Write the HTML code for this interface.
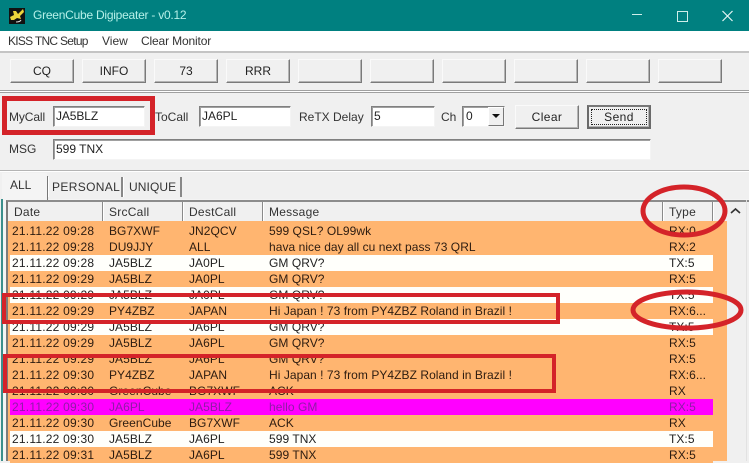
<!DOCTYPE html>
<html><head><meta charset="utf-8"><style>
html,body{margin:0;padding:0}
body{width:749px;height:461px;overflow:hidden;position:relative;background:#f0f0f0;font:12px "Liberation Sans",sans-serif;color:#222}
div,span{position:absolute;box-sizing:border-box;white-space:nowrap}
.btn{height:24px;width:64px;top:59px;background:#f0f0f0;border:1px solid;border-color:#fafafa #7a7a7a #7a7a7a #fafafa;box-shadow:inset -1px -1px 0 #b4b4b4;text-align:center;line-height:23px;color:#222}
.inp{background:#fff;height:21px;border:1px solid;border-color:#808080 #f4f4f4 #f4f4f4 #808080;box-shadow:inset 1px 1px 0 #a0a0a0;padding-left:2px;line-height:19px;color:#222}
.lbl{line-height:14px;color:#333}
.hd{top:202px;height:19px;line-height:20px;color:#333;letter-spacing:.25px}
.sep{top:202px;width:2px;height:19px;background:#8a8a8a;border-right:1px solid #fff}
.r{left:10px;width:703px;height:16px}
.r span{top:0;line-height:16px;color:#2d1c10;letter-spacing:.05px}
.r .c1{left:2px;letter-spacing:.22px}.c2{left:99px}.c3{left:179px}.c4{left:259px}.c5{left:659px}
.w{background:#fffffb}
.r.w span{color:#222}
.o{background:#ffb570}
.m{background:#ff00ff}
.r.m span{color:#8f1aa8}
.red{border:4px solid #d42329}
</style></head><body>
<div style="left:0;top:0;width:749px;height:31px;background:#008080"></div>
<svg style="position:absolute;left:9px;top:8px" width="16" height="16" viewBox="0 0 16 16"><rect width="16" height="16" fill="#111"/><path d="M1 9 5 7 4 3 7 3 9 6 14 1 15 4 11 8 12 11 8 10 5 12 2 12Z" fill="#ecd53c"/><path d="M7 14Q11 14 12 12" stroke="#ddd" fill="none"/></svg>
<div style="left:33px;top:8px;line-height:15px;color:#b5f0e8;font-size:12px;letter-spacing:-.24px">GreenCube Digipeater - v0.12</div>
<svg style="position:absolute;left:630px;top:6px" width="119" height="20" viewBox="0 0 119 20"><path d="M2 8.5H12" stroke="#cfeeea" stroke-width="1"/><rect x="47.5" y="5.5" width="10" height="10" fill="none" stroke="#cfeeea"/><path d="M92.500 5 102.500 15M102.500 5 92.500 15" stroke="#e6f6f4" stroke-width="1.2"/></svg>

<div style="left:0;top:31px;width:749px;height:20px;background:#fff"></div>
<div class="lbl" style="left:8px;top:34px;letter-spacing:-.72px">KISS TNC Setup</div>
<div class="lbl" style="left:102px;top:34px">View</div>
<div class="lbl" style="left:141px;top:34px;letter-spacing:-.15px">Clear Monitor</div>
<div style="left:0;top:51px;width:749px;height:2px;background:#c4c4c4"></div>

<div class="btn" style="left:10px">CQ</div>
<div class="btn" style="left:82px">INFO</div>
<div class="btn" style="left:154px">73</div>
<div class="btn" style="left:226px">RRR</div>
<div class="btn" style="left:298px"></div>
<div class="btn" style="left:370px"></div>
<div class="btn" style="left:442px"></div>
<div class="btn" style="left:514px"></div>
<div class="btn" style="left:586px"></div>
<div class="btn" style="left:658px"></div>
<div style="left:0;top:90px;width:749px;height:3px;background:#fff;border-top:1px solid #a0a0a0;border-bottom:1px solid #a0a0a0"></div>

<div class="lbl" style="left:9px;top:110px;letter-spacing:-.1px">MyCall</div>
<div class="inp" style="left:53px;top:106px;width:92px;letter-spacing:-.1px">JA5BLZ</div>
<div class="lbl" style="left:155px;top:110px">ToCall</div>
<div class="inp" style="left:199px;top:106px;width:92px">JA6PL</div>
<div class="lbl" style="left:299px;top:110px">ReTX Delay</div>
<div class="inp" style="left:371px;top:106px;width:64px">5</div>
<div class="lbl" style="left:441px;top:110px">Ch</div>
<div class="inp" style="left:462px;top:106px;width:43px;padding-left:3px">0</div>
<div style="left:488px;top:107px;width:16px;height:19px;background:#f0f0f0;border:1px solid;border-color:#fff #777 #777 #fff"></div>
<svg style="position:absolute;left:491px;top:113px" width="10" height="6"><path d="M1 1H9L5 5Z" fill="#111"/></svg>
<div class="btn" style="left:515px;top:105px;letter-spacing:.4px">Clear</div>
<div class="btn" style="left:587px;top:105px;border:2px solid #6a6a6a;border-top-color:#777;line-height:21px;letter-spacing:.4px">Send</div>
<div style="left:591px;top:109px;width:56px;height:16px;border:1px dotted #222"></div>
<div class="lbl" style="left:9px;top:142px">MSG</div>
<div class="inp" style="left:53px;top:139px;width:598px">599 TNX</div>
<div style="left:0;top:170px;width:749px;height:2px;background:#b4b4b4;border-bottom:1px solid #fff"></div>

<div style="left:2px;top:199px;width:747px;height:262px;background:#f4f4f4"></div>
<div style="left:2px;top:173px;width:45px;height:27px;background:#f4f4f4"></div>
<div style="left:47px;top:176px;width:1px;height:24px;background:#777"></div>
<div class="lbl" style="left:10px;top:178px">ALL</div>
<div style="left:48px;top:177px;width:75px;height:20px;border-right:2px solid #888;border-left:1px solid #fff"></div>
<div class="lbl" style="left:52px;top:180px;letter-spacing:.35px">PERSONAL</div>
<div style="left:123px;top:177px;width:59px;height:20px;border-right:2px solid #888;border-left:1px solid #fff"></div>
<div class="lbl" style="left:129px;top:180px;letter-spacing:.1px">UNIQUE</div>

<div style="left:1px;top:199px;width:2px;height:262px;background:#3b8f8c"></div>
<div style="left:6px;top:200px;width:743px;height:261px;background:#f0f0f0;border-top:2px solid #8c8c8c;border-left:2px solid #7c7c7c"></div>
<div class="hd" style="left:14px">Date</div><div class="sep" style="left:102px"></div>
<div class="hd" style="left:109px">SrcCall</div><div class="sep" style="left:182px"></div>
<div class="hd" style="left:189px">DestCall</div><div class="sep" style="left:262px"></div>
<div class="hd" style="left:269px">Message</div><div class="sep" style="left:662px"></div>
<div class="hd" style="left:669px">Type</div><div class="sep" style="left:712px"></div>
<svg style="position:absolute;left:730px;top:207px" width="11" height="8"><path d="M1 6 5.500 2 10 6" fill="none" stroke="#333" stroke-width="1.6"/></svg>
<div style="left:746px;top:200px;width:1px;height:261px;background:#e2e2e2"></div>

<div style="left:8px;top:221px;width:719px;height:240px;background:#ffb570"></div>

<div class="r o" style="top:223px"><span class="c1">21.11.22 09:28</span><span class="c2">BG7XWF</span><span class="c3">JN2QCV</span><span class="c4">599 QSL? OL99wk</span><span class="c5">RX:0</span></div>
<div class="r o" style="top:239px"><span class="c1">21.11.22 09:28</span><span class="c2">DU9JJY</span><span class="c3">ALL</span><span class="c4">hava nice day all cu next pass 73 QRL</span><span class="c5">RX:2</span></div>
<div class="r w" style="top:255px"><span class="c1">21.11.22 09:28</span><span class="c2">JA5BLZ</span><span class="c3">JA0PL</span><span class="c4">GM QRV?</span><span class="c5">TX:5</span></div>
<div class="r o" style="top:271px"><span class="c1">21.11.22 09:29</span><span class="c2">JA5BLZ</span><span class="c3">JA0PL</span><span class="c4">GM QRV?</span><span class="c5">RX:5</span></div>
<div class="r w" style="top:287px"><span class="c1">21.11.22 09:29</span><span class="c2">JA5BLZ</span><span class="c3">JA0PL</span><span class="c4">GM QRV?</span><span class="c5">TX:5</span></div>
<div class="r o" style="top:303px"><span class="c1">21.11.22 09:29</span><span class="c2">PY4ZBZ</span><span class="c3">JAPAN</span><span class="c4">Hi Japan ! 73 from PY4ZBZ Roland in Brazil !</span><span class="c5">RX:6...</span></div>
<div class="r w" style="top:319px"><span class="c1">21.11.22 09:29</span><span class="c2">JA5BLZ</span><span class="c3">JA6PL</span><span class="c4">GM QRV?</span><span class="c5">TX:5</span></div>
<div class="r o" style="top:335px"><span class="c1">21.11.22 09:29</span><span class="c2">JA5BLZ</span><span class="c3">JA6PL</span><span class="c4">GM QRV?</span><span class="c5">RX:5</span></div>
<div class="r o" style="top:351px"><span class="c1">21.11.22 09:29</span><span class="c2">JA5BLZ</span><span class="c3">JA6PL</span><span class="c4">GM QRV?</span><span class="c5">RX:5</span></div>
<div class="r o" style="top:367px"><span class="c1">21.11.22 09:30</span><span class="c2">PY4ZBZ</span><span class="c3">JAPAN</span><span class="c4">Hi Japan ! 73 from PY4ZBZ Roland in Brazil !</span><span class="c5">RX:6...</span></div>
<div class="r o" style="top:383px"><span class="c1">21.11.22 09:30</span><span class="c2">GreenCube</span><span class="c3">BG7XWF</span><span class="c4">ACK</span><span class="c5">RX</span></div>
<div class="r m" style="top:399px"><span class="c1">21.11.22 09:30</span><span class="c2">JA6PL</span><span class="c3">JA5BLZ</span><span class="c4">hello GM</span><span class="c5">RX:5</span></div>
<div class="r o" style="top:415px"><span class="c1">21.11.22 09:30</span><span class="c2">GreenCube</span><span class="c3">BG7XWF</span><span class="c4">ACK</span><span class="c5">RX</span></div>
<div class="r w" style="top:431px"><span class="c1">21.11.22 09:30</span><span class="c2">JA5BLZ</span><span class="c3">JA6PL</span><span class="c4">599 TNX</span><span class="c5">TX:5</span></div>
<div class="r o" style="top:447px"><span class="c1">21.11.22 09:31</span><span class="c2">JA5BLZ</span><span class="c3">JA6PL</span><span class="c4">599 TNX</span><span class="c5">RX:5</span></div>

<div class="red" style="left:2px;top:96px;width:153px;height:39px;border-width:5px"></div>
<div class="red" style="left:2px;top:293px;width:558px;height:31px"></div>
<div class="red" style="left:3px;top:354px;width:553px;height:39px"></div>
<svg style="position:absolute;left:620px;top:175px" width="129" height="160"><ellipse cx="64" cy="36" rx="41" ry="24" fill="none" stroke="#d42329" stroke-width="5"/><ellipse cx="67" cy="135" rx="54" ry="18" fill="none" stroke="#d42329" stroke-width="5"/></svg>
</body></html>
